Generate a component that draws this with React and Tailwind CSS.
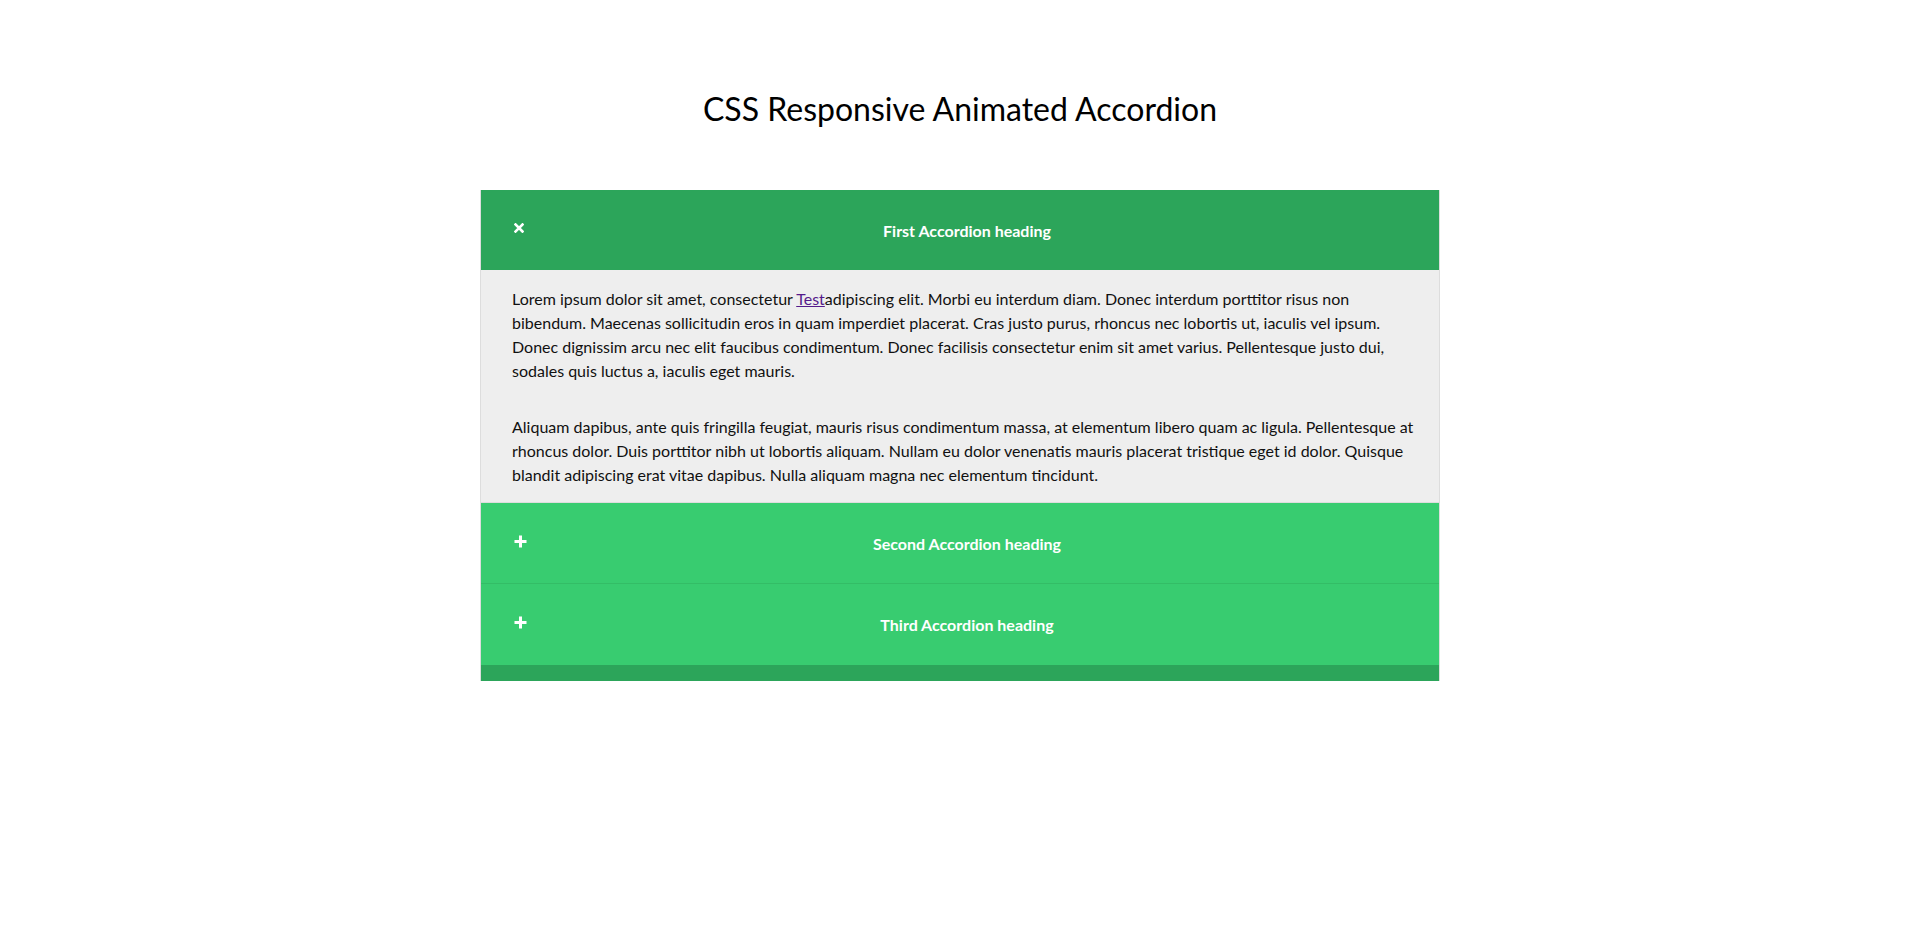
import React from 'react';

const sections = [
  { title: 'First Accordion heading', open: true },
  { title: 'Second Accordion heading', open: false },
  { title: 'Third Accordion heading', open: false },
];

const CloseIcon = () => (
  <svg width="10" height="10" viewBox="0 0 10 10" className="absolute left-[33px] top-[33px]">
    <path d="M1.5 1.5 L8.5 8.5 M8.5 1.5 L1.5 8.5" stroke="white" strokeWidth="2.6" strokeLinecap="square" />
  </svg>
);

const PlusIcon = () => (
  <svg width="13" height="13" viewBox="0 0 13 13" className="absolute left-[33px] top-[32px]">
    <path d="M6.5 0.5 V12.5 M0.5 6.5 H12.5" stroke="white" strokeWidth="3" />
  </svg>
);

const App = () => {
  return (
    <div className="min-h-[942px] bg-white pl-[7px] font-['Lato','Liberation_Sans',sans-serif] text-black">
      <h1 className="pt-[89px] text-center text-[32px] leading-[40px] font-normal">CSS Responsive Animated Accordion</h1>
      <div className="mx-auto mt-[61px] w-[960px] border-x border-[#dddddd]">
        {sections.map((s, idx) => (
          <div key={idx}>
            <div
              className={`relative flex items-center justify-center pl-[14px] text-[16px] font-bold text-white ${
                s.open ? 'bg-[#2ca55a]' : 'bg-[#38cc70]'
              } ${idx === 2 ? 'h-[82px] border-t border-[#33bd66]' : 'h-[80px]'}`}
            >
              {s.open ? <CloseIcon /> : <PlusIcon />}
              <span className="mt-[1px]">{s.title}</span>
            </div>
            {s.open && (
              <div className="border-b border-[#dddddd] bg-[#eeeeee] pl-[31px] pr-[22px] pt-[17px] pb-[15px] text-[16px] leading-[24px] text-[#111111]">
                <p className="mb-[32px]">
                  Lorem ipsum dolor sit amet, consectetur <a href="#" className="text-[#551a8b] underline">Test</a>adipiscing elit. Morbi eu interdum diam. Donec interdum porttitor risus non bibendum. Maecenas sollicitudin eros in quam imperdiet placerat. Cras justo purus, rhoncus nec lobortis ut, iaculis vel ipsum. Donec dignissim arcu nec elit faucibus condimentum. Donec facilisis consectetur enim sit amet varius. Pellentesque justo dui, sodales quis luctus a, iaculis eget mauris.
                </p>
                <p>
                  Aliquam dapibus, ante quis fringilla feugiat, mauris risus condimentum massa, at elementum libero quam ac ligula. Pellentesque at rhoncus dolor. Duis porttitor nibh ut lobortis aliquam. Nullam eu dolor venenatis mauris placerat tristique eget id dolor. Quisque blandit adipiscing erat vitae dapibus. Nulla aliquam magna nec elementum tincidunt.
                </p>
              </div>
            )}
          </div>
        ))}
        <div className="h-[16px] bg-[#2ca55a]" />
      </div>
    </div>
  );
};

export default App;
